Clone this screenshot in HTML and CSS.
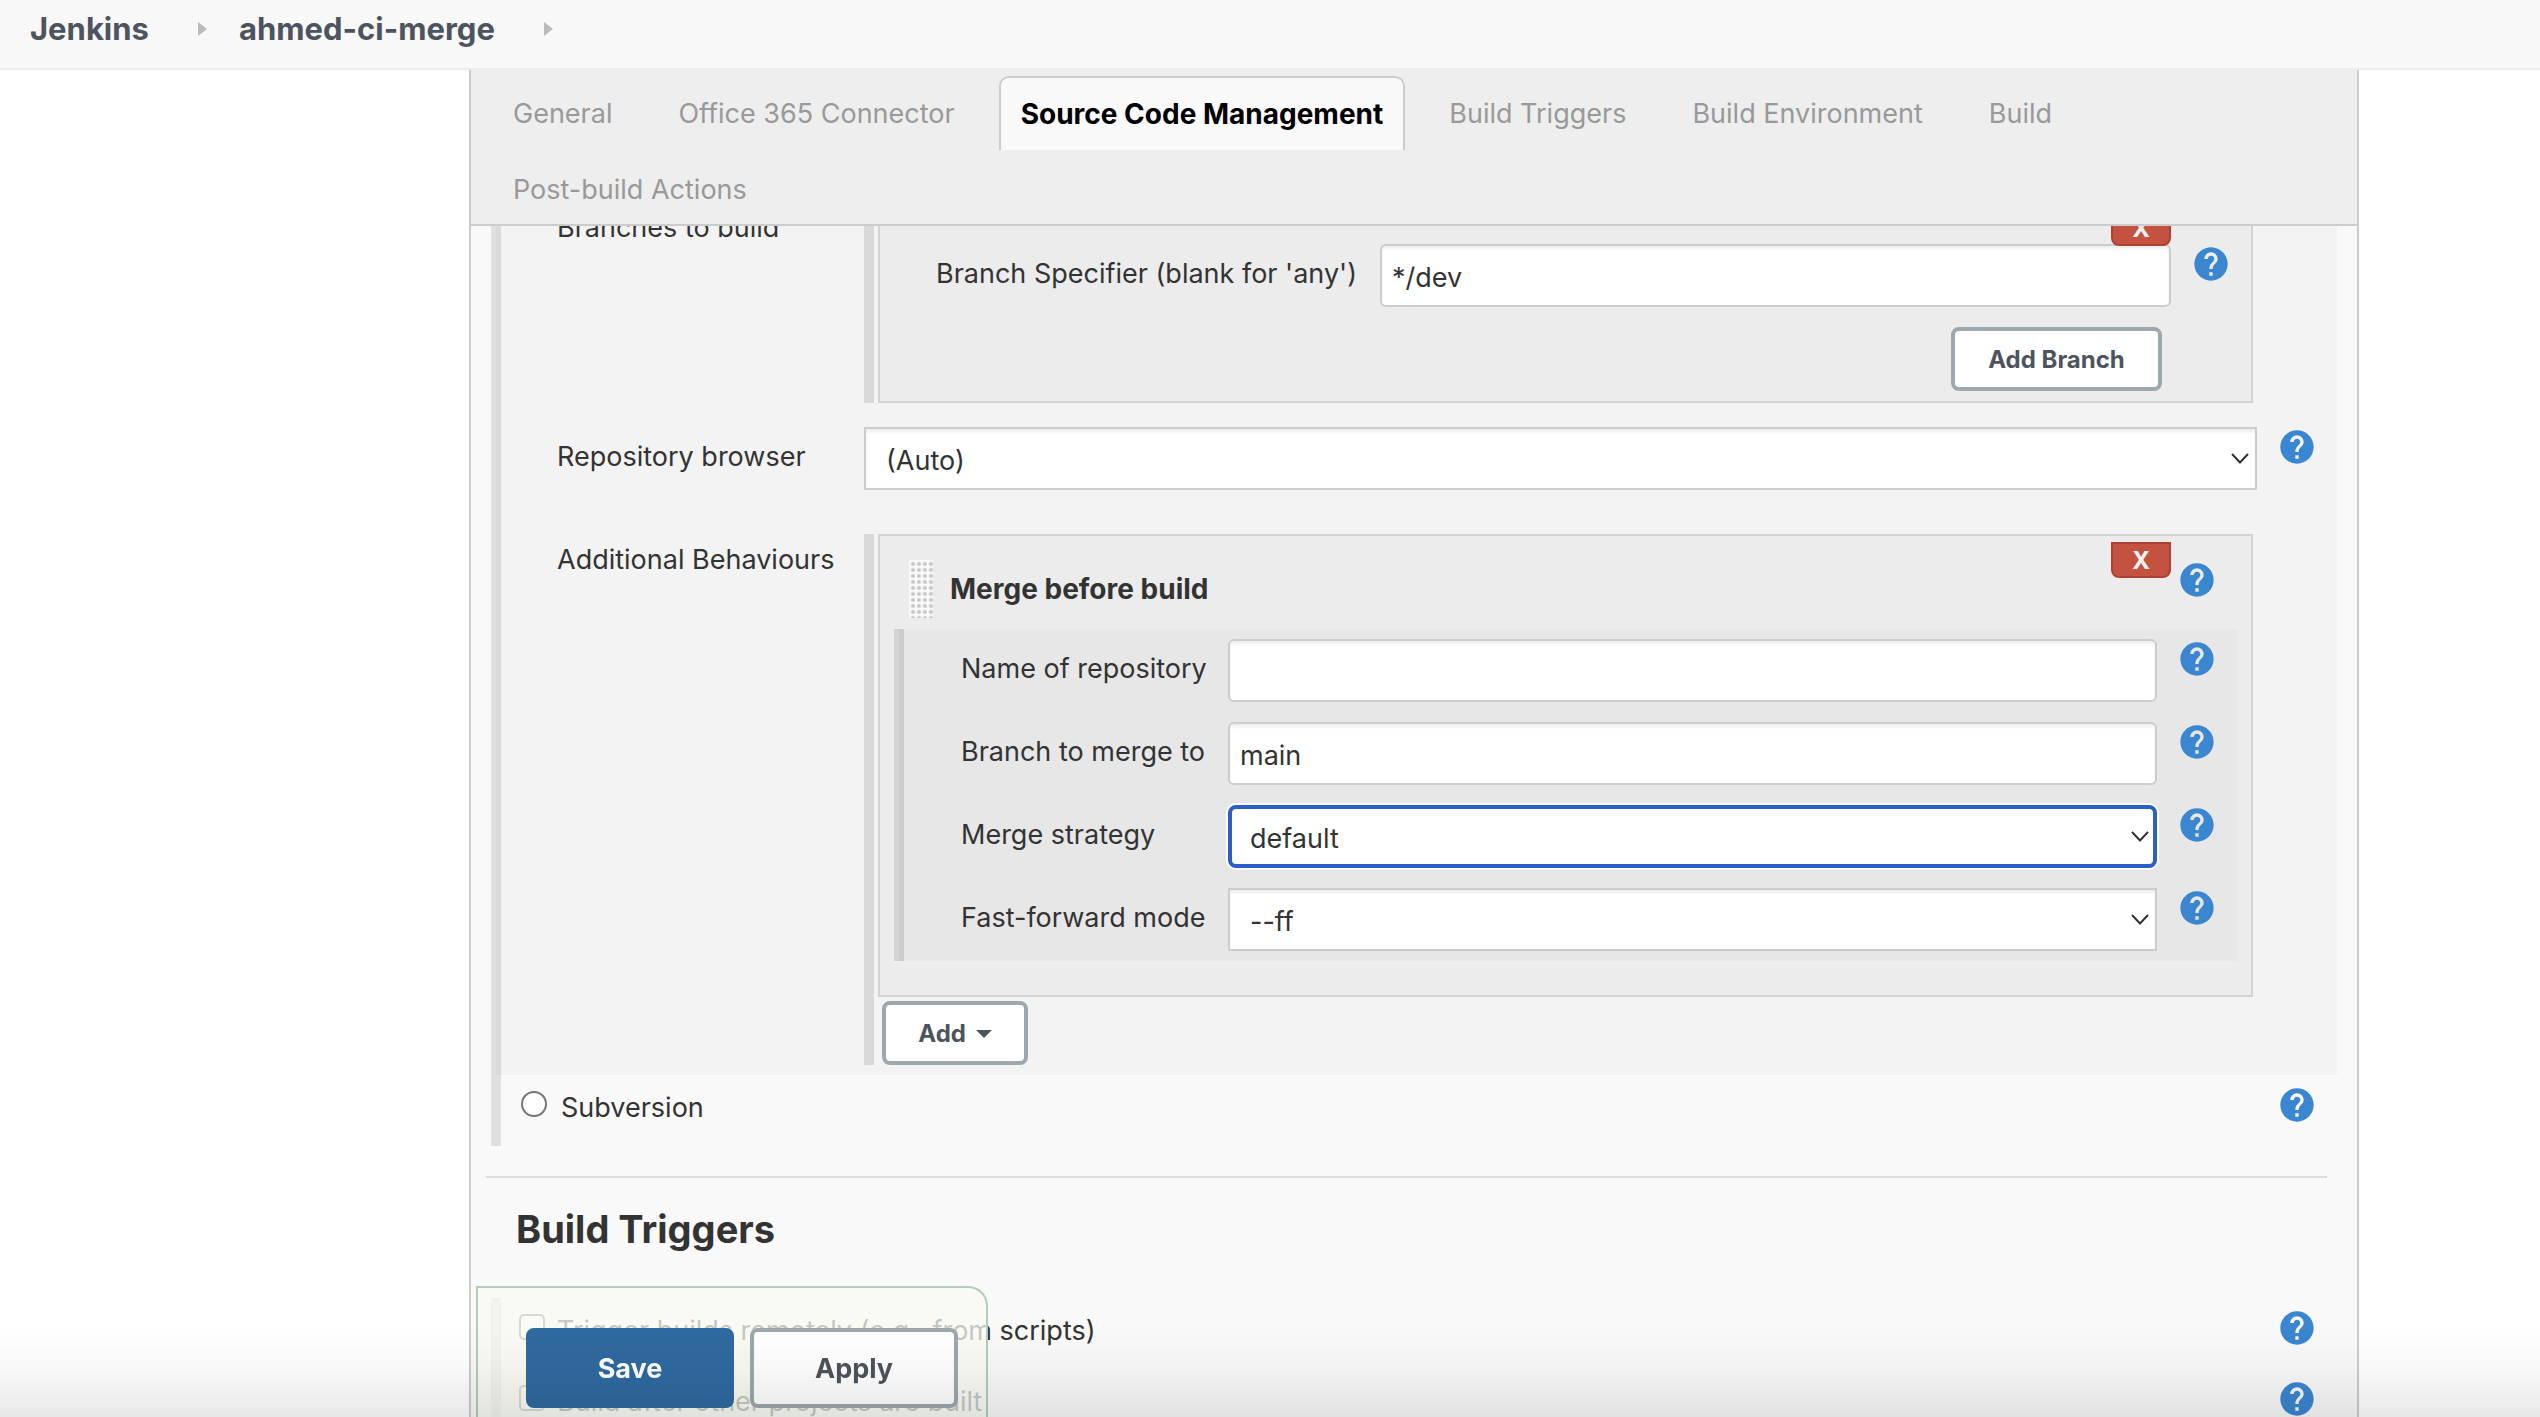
FILE: index.html
```html
<!DOCTYPE html>
<html lang="en">
<head>
<meta charset="utf-8">
<title>ahmed-ci-merge Config [Jenkins]</title>
<link rel="stylesheet" href="styles.css">
</head>
<body>
<svg class="defs" aria-hidden="true">
  <symbol id="help" viewBox="0 0 24 24"><path d="M12 2C6.480 2 2 6.480 2 12s4.480 10 10 10 10-4.480 10-10S17.520 2 12 2zm1 17h-2v-2h2v2zm2.070-7.750l-.9.920C13.450 12.900 13 13.500 13 15h-2v-.5c0-1.100.450-2.100 1.170-2.830l1.240-1.260c.370-.360.590-.860.590-1.410 0-1.100-.9-2-2-2s-2 .9-2 2H8c0-2.210 1.790-4 4-4s4 1.790 4 4c0 .880-.360 1.680-.930 2.250z"/></symbol>
  <symbol id="chevron" viewBox="0 0 18 11"><path d="M1 1l8 8.500L17 1" fill="none" stroke="#333" stroke-width="2"/></symbol>
  <symbol id="crumb" viewBox="0 0 9 14"><path d="M0 0l9 7-9 7z" fill="#bbb"/></symbol>
</svg>

<nav class="breadcrumbs" aria-label="Breadcrumb">
  <a href="#jenkins">Jenkins</a>
  <svg class="crumb-arrow"><use href="#crumb"/></svg>
  <a href="#job">ahmed-ci-merge</a>
  <svg class="crumb-arrow"><use href="#crumb"/></svg>
</nav>

<main class="panel">
  <nav class="tabs" aria-label="Sections">
    <a class="tab" href="#general">General</a>
    <a class="tab" href="#office">Office 365 Connector</a>
    <a class="tab active" href="#scm">Source Code Management</a>
    <a class="tab" href="#triggers">Build Triggers</a>
    <a class="tab" href="#environment">Build Environment</a>
    <a class="tab" href="#build">Build</a>
    <a class="tab" href="#post">Post-build Actions</a>
  </nav>

  <form class="config">
    <div class="config-body">
      <section class="git">
        <div class="row top">
          <span class="label">Branches to build</span>
          <div class="repeated">
            <div class="chunk">
              <div class="chunk-head slim">
                <button type="button" class="delete">X</button>
              </div>
              <div class="row specifier">
                <label class="label" for="spec">Branch Specifier (blank for 'any')</label>
                <input class="field" id="spec" type="text" value="*/dev">
                <a class="help" href="#help" aria-label="Help"><svg><use href="#help"/></svg></a>
              </div>
              <button type="button" class="btn add-branch">Add Branch</button>
            </div>
          </div>
        </div>

        <div class="row browser">
          <label class="label" for="browser">Repository browser</label>
          <div class="select"><select class="field" id="browser"><option>(Auto)</option></select><svg><use href="#chevron"/></svg></div>
          <a class="help" href="#help" aria-label="Help"><svg><use href="#help"/></svg></a>
        </div>

        <div class="row top">
          <span class="label">Additional Behaviours</span>
          <div class="repeated">
            <div class="chunk">
              <div class="chunk-head">
                <span class="handle"></span>
                <b class="chunk-title">Merge before build</b>
                <button type="button" class="delete">X</button>
                <a class="help" href="#help" aria-label="Help"><svg><use href="#help"/></svg></a>
              </div>
              <div class="nested">
                <div class="row">
                  <label class="label" for="repo">Name of repository</label>
                  <input class="field" id="repo" type="text">
                  <a class="help" href="#help" aria-label="Help"><svg><use href="#help"/></svg></a>
                </div>
                <div class="row">
                  <label class="label" for="target">Branch to merge to</label>
                  <input class="field" id="target" type="text" value="main">
                  <a class="help" href="#help" aria-label="Help"><svg><use href="#help"/></svg></a>
                </div>
                <div class="row">
                  <label class="label" for="strategy">Merge strategy</label>
                  <div class="select"><select class="field focused" id="strategy"><option>default</option></select><svg><use href="#chevron"/></svg></div>
                  <a class="help" href="#help" aria-label="Help"><svg><use href="#help"/></svg></a>
                </div>
                <div class="row">
                  <label class="label" for="ff">Fast-forward mode</label>
                  <div class="select"><select class="field" id="ff"><option>--ff</option></select><svg><use href="#chevron"/></svg></div>
                  <a class="help" href="#help" aria-label="Help"><svg><use href="#help"/></svg></a>
                </div>
              </div>
            </div>
            <button type="button" class="btn add">Add <span class="caret"></span></button>
          </div>
        </div>
      </section>

      <div class="option radio">
        <input type="radio" id="svn" name="scm">
        <label for="svn">Subversion</label>
        <a class="help" href="#help" aria-label="Help"><svg><use href="#help"/></svg></a>
      </div>

      <hr>
      <h2>Build Triggers</h2>

      <div class="option">
        <input type="checkbox" id="remote">
        <label for="remote">Trigger builds remotely (e.g., from scripts)</label>
        <a class="help" href="#help" aria-label="Help"><svg><use href="#help"/></svg></a>
      </div>
      <div class="option">
        <input type="checkbox" id="after">
        <label for="after">Build after other projects are built</label>
        <a class="help" href="#help" aria-label="Help"><svg><use href="#help"/></svg></a>
      </div>
    </div>

    <div class="save-bar">
      <button type="button" class="btn primary">Save</button>
      <button type="button" class="btn">Apply</button>
    </div>
  </form>
</main>
<div class="bottom-shade"></div>
</body>
</html>
```
FILE: styles.css
```css
* { box-sizing: border-box; }

body {
  margin: 0;
  height: 100vh;
  display: flex;
  flex-direction: column;
  overflow: hidden;
  background: #fff;
  color: #333;
  font: 27px/40px Inter, "Liberation Sans", sans-serif;
}

a { color: inherit; text-decoration: none; }
button, input, select { font: inherit; color: inherit; margin: 0; }
.defs { display: none; }

/* Breadcrumbs */
.breadcrumbs {
  flex: none;
  display: flex;
  align-items: center;
  height: 70px;
  padding: 0 30px 11px;
  background: #f8f8f8;
  border-bottom: 2px solid #ebedef;
  color: #4d545d;
  font-size: 31px;
  font-weight: 700;
}
.crumb-arrow { width: 9px; height: 14px; margin: 0 32px 0 49px; }

/* Panel and tabs */
.panel {
  flex: 1;
  min-height: 0;
  display: flex;
  flex-direction: column;
  margin: 0 181px 0 469px;
  background: #f9f9f9;
  border: solid #ccc;
  border-width: 0 2px;
}
.tabs {
  flex: none;
  display: flex;
  flex-wrap: wrap;
  gap: 4px 22px;
  padding: 6px 80px 0 20px;
  background: #eee;
  border-bottom: 2px solid #ccc;
  color: #999;
}
.tab {
  height: 74px;
  margin-bottom: -2px;
  padding: 16px 20px;
  border: 2px solid transparent;
  border-bottom: 0;
  border-radius: 10px 10px 0 0;
}
.tab.active {
  background: #f9f9f9;
  border-color: #ccc;
  color: #000;
  font-size: 28px;
  font-weight: 700;
}

/* Form */
.config { flex: 1; min-height: 0; overflow: hidden; }
.config-body { margin-top: -24px; padding: 0 20px; }
.git {
  padding: 0 0 10px 66px;
  background: linear-gradient(to right, #e0e0e0 5px, #d9d9d9 5px 10px, #f3f3f3 10px);
}
.row {
  display: grid;
  grid-template-columns: 307px 1fr 80px;
  align-items: start;
}
.label { padding-top: 10px; }
.top > .label { padding-top: 6px; }
.browser { margin: 24px 0 44px; }
.specifier { grid-template-columns: 444px 1fr 80px; padding-left: 56px; }

.help { display: block; height: 37px; padding: 3px 0 0 23px; }
.help svg { display: block; width: 40px; height: 40px; margin: -3px; fill: #3b86d0; }

.field {
  display: block;
  width: 100%;
  height: 63px;
  padding: 3px 10px 0;
  background: #fff;
  border: 2px solid #ccc;
  border-radius: 6px;
  box-shadow: inset 0 3px 3px #0001;
  outline: 0;
}
.select { position: relative; }
.select svg { position: absolute; top: 26px; right: 8px; width: 18px; height: 11px; }
select.field { appearance: none; padding: 4px 20px 0; border-radius: 0; }
select.focused {
  padding: 4px 18px 0;
  border: 4px solid #2a5fc9;
  border-radius: 8px;
  box-shadow: 0 0 0 2px #fff;
}

.repeated { padding: 0 4px; border-left: 10px solid #d9d9d9; }
.chunk { background: #ececec; border: 2px solid #d3d3d3; }
.chunk-head {
  display: flex;
  align-items: flex-start;
  height: 93px;
  padding: 6px 37px 0 29px;
}
.chunk-head.slim { height: 40px; padding-right: 80px; }
.chunk-head .help { padding: 21px 0 0 9px; }
.handle {
  width: 24px;
  height: 58px;
  margin: 18px 17px 0 0;
  background: radial-gradient(circle at 4px 4px, #bbb 0, #c8c8c8 1px, #fafafa 3px) 0 0 / 6px 6px;
}
.chunk-title { padding-top: 27px; font-size: 28px; font-weight: 700; }
.delete {
  position: relative;
  width: 60px;
  height: 36px;
  margin-left: auto;
  padding: 1px 0 0;
  background: #c45240;
  border: 2px solid #b04030;
  border-radius: 0 0 8px 8px;
  color: #f3f3f3;
  font-size: 24px;
  font-weight: 700;
  line-height: 32px;
}
.nested {
  display: grid;
  gap: 20px;
  margin: 0 14px 34px;
  padding: 10px 0 10px 67px;
  background: linear-gradient(to right, #d4d4d4 5px, #ccc 5px 10px, #e7e7e7 10px);
}
.nested .row { grid-template-columns: 267px 1fr 80px; }

.btn {
  display: block;
  height: 64px;
  padding: 1px 0 0;
  background: #fff;
  border: 4px solid #9da8ae;
  border-radius: 8px;
  color: #4d545d;
  font-size: 24px;
  font-weight: 700;
}
.add-branch { width: 211px; margin: 20px 89px 10px auto; }
.add { width: 146px; margin: 4px; }
.repeated > .add { margin-bottom: 0; }
.caret {
  display: inline-block;
  margin-left: 4px;
  vertical-align: 4px;
  border: 8px solid transparent;
  border-top-color: #4d545d;
  border-bottom: 0;
}

.option {
  display: grid;
  grid-template-columns: 38px 1fr 57px;
  align-items: start;
  height: 71px;
  padding: 13px 0 0 18px;
  border-left: 10px solid #e0e0e0;
}
.option.radio { grid-template-columns: 40px 1fr 57px; padding-left: 20px; }
.option .help { padding: 0; }
.option input {
  appearance: none;
  width: 26px;
  height: 26px;
  margin-top: 3px;
  background: #fff;
  border: 2px solid #767676;
  border-radius: 5px;
}
.option input[type="radio"] { border-radius: 50%; }

hr { height: 2px; margin: 30px 10px 0 -5px; background: #ddd; border: 0; }
h2 { margin: 26px 25px 44px; font-size: 38px; font-weight: 700; line-height: 50px; }

/* Floating save bar */
.save-bar {
  position: fixed;
  left: 476px;
  bottom: 0;
  display: flex;
  gap: 16px;
  padding: 40px 28px 9px 48px;
  background: rgba(247, 250, 240, .75);
  border: 2px solid #b0cdbd;
  border-bottom: 0;
  border-radius: 0 20px 0 0;
}
.save-bar .btn { width: 208px; height: 80px; font-size: 27px; }
.save-bar .primary { background: #2f6aa0; border-color: #2f6aa0; color: #fff; }
.bottom-shade {
  position: fixed;
  inset: auto 0 0;
  height: 90px;
  background: linear-gradient(#0000, #00000006 40%, #00000017);
  pointer-events: none;
}
```
